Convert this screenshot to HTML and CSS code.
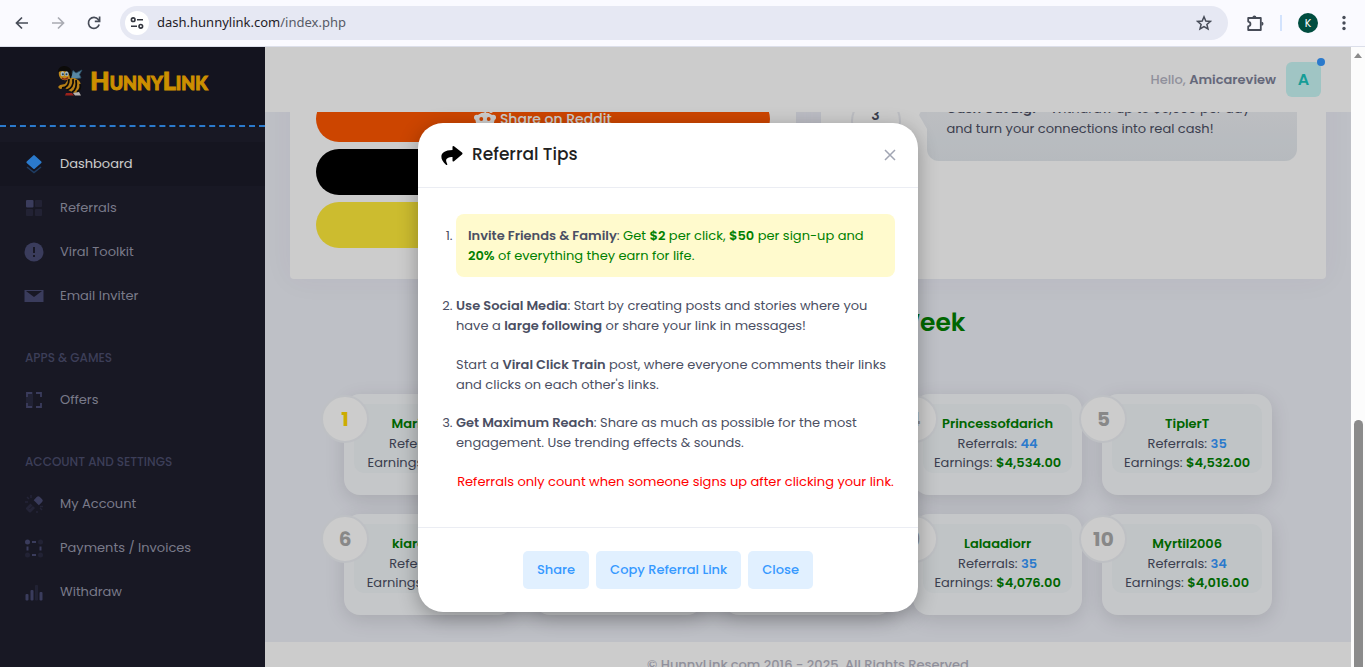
FILE: index.html
```html
<!DOCTYPE html>
<html lang="en">
<head>
  <meta charset="UTF-8" />
  <meta name="viewport" content="width=device-width, initial-scale=1.0"/>
  <title>HunnyLink Dashboard</title>
  <link rel="stylesheet" href="styles.css">
</head>
<body>
  <!-- Browser bar -->
  <header class="browser-bar">
    <button class="nav-btn" aria-label="Back">
      <svg width="16" height="16" viewBox="0 0 16 16" fill="none" stroke="#474c58" stroke-width="1.7"><path d="M14 8H3M8 2.500 2.500 8 8 13.500"/></svg>
    </button>
    <button class="nav-btn" aria-label="Forward">
      <svg width="16" height="16" viewBox="0 0 16 16" fill="none" stroke="#a9abb3" stroke-width="1.7"><path d="M2 8h11M8 2.500 13.500 8 8 13.500"/></svg>
    </button>
    <button class="nav-btn" aria-label="Reload">
      <svg width="16" height="16" viewBox="0 0 16 16" fill="none" stroke="#474c58" stroke-width="1.7"><path d="M13.200 9.500A5.500 5.500 0 1 1 12.300 4.500L13.500 6"/><path d="M13.600 1.500V6.300H8.800"/></svg>
    </button>
    <div class="address">
      <span class="site-info">
        <svg width="14" height="14" viewBox="0 0 14 14" fill="none" stroke="#33363f" stroke-width="1.6"><circle cx="3.200" cy="3.700" r="1.800"/><path d="M7 3.700h6M1 10.300h6"/><circle cx="10.800" cy="10.300" r="1.800"/></svg>
      </span>
      <span class="url">dash.hunnylink.com<span class="path">/index.php</span></span>
      <button class="nav-btn" aria-label="Bookmark">
        <svg width="16" height="16" viewBox="0 0 16 16" fill="none" stroke="#474c58" stroke-width="1.500"><path d="M8 1.800 9.800 6l4.600.4-3.500 3 1.100 4.500L8 11.500l-4 2.400 1.100-4.500-3.500-3L6.200 6z"/></svg>
      </button>
    </div>
    <button class="nav-btn" aria-label="Extensions">
      <svg width="18" height="18" viewBox="0 0 18 18"><path d="M2.200 4h12.600v12H2.200v-3.600c3-.6 3-4.200 0-4.800z" fill="none" stroke="#474c58" stroke-width="1.800" stroke-linejoin="round"/><path d="M6.400 3.500a2 2 0 0 1 4 0zM15.500 7.800a2 2 0 0 1 0 4z" fill="#474c58"/></svg>
    </button>
    <span class="bar-divider"></span>
    <span class="profile">K</span>
    <button class="nav-btn" aria-label="Menu">
      <svg width="16" height="16" viewBox="0 0 16 16" fill="#474c58"><circle cx="8" cy="2.500" r="1.700"/><circle cx="8" cy="8" r="1.700"/><circle cx="8" cy="13.500" r="1.700"/></svg>
    </button>
  </header>

  <div class="page">
    <!-- Sidebar -->
    <aside class="sidebar">
      <a class="brand" href="index.php">
        <svg width="26" height="32" viewBox="0 0 26 32">
          <path d="M14 12 16 5.500l3 2.500 6-3-2.500 4.500L24 13l-9 1z" fill="#6fa9cc" stroke="#35637e" stroke-width=".8"/>
          <path d="M12 13c6-1 12 2 12 8 0 4-3 6-6 7l-5-2-5-3-5 1-2-2 2-2 5-1z" fill="#e5a01b"/>
          <path d="M5 23c4 0 7-3 7-9M10 25c4-1 7-5 6-11M15 27c4-2 5-6 4-12M20 27c3-2 4-5 3-8" stroke="#100e0c" stroke-width="1.800" fill="none"/>
          <circle cx="8" cy="9" r="6.200" fill="#f0ac20"/>
          <path d="M1 7C1 0 11-1 14 5l1 5-2 4c0-6-4-10-12-7z" fill="#100e0c"/>
          <ellipse cx="5.500" cy="8.800" rx="1.900" ry="2.500" fill="#cfe6f0"/><ellipse cx="9.700" cy="8.800" rx="1.900" ry="2.500" fill="#cfe6f0"/>
          <circle cx="5.900" cy="9.300" r="1" fill="#24516b"/><circle cx="9.500" cy="9.300" r="1" fill="#24516b"/>
          <path d="M5 13q3 2.500 6-.5" stroke="#a5281c" stroke-width="1.300" fill="none"/>
          <path d="M9 28h6l2 2.500H8z" fill="#c22a22"/><path d="M16 28l6-1 2 3.500h-6z" fill="#e8e2dc"/>
        </svg>
        <span class="brand-name">HunnyLink</span>
      </a>
      <nav class="menu">
        <a class="menu-item active" href="#">
          <svg width="20" height="20" viewBox="0 0 20 20"><path d="m3 13 7 5.500 7-5.500" fill="none" stroke="#3699ff" stroke-opacity=".4" stroke-width="1.500"/><path d="M10.700 1.400 17.300 7.600q.7.700 0 1.400L10.700 14.800q-.7.500-1.400 0L2.700 9Q2 8.300 2.700 7.600l6.600-6.200q.7-.6 1.400 0z" fill="#3699ff"/></svg>
          Dashboard
        </a>
        <a class="menu-item" href="#">
          <svg width="20" height="20" viewBox="0 0 20 20" fill="#494b74"><rect x="2" y="2" width="7.500" height="7.500" rx="1"/><g opacity=".3"><rect x="11" y="2" width="7" height="7" rx="1"/><rect x="2" y="11" width="7" height="7" rx="1"/><rect x="11" y="11" width="7" height="7" rx="1"/></g></svg>
          Referrals
        </a>
        <a class="menu-item" href="#">
          <svg width="20" height="20" viewBox="0 0 20 20"><circle cx="10" cy="10" r="9.500" fill="#494b74"/><path d="M10 5v6M10 13v2" stroke="#1e1e2d" stroke-width="2"/></svg>
          Viral Toolkit
        </a>
        <a class="menu-item" href="#">
          <svg width="20" height="20" viewBox="0 0 20 20"><path d="M.5 4h19v12H.5z" fill="#494b74"/><path d="m2 5 8 6 8-6z" fill="#1e1e2d"/></svg>
          Email Inviter
        </a>
        <h4 class="menu-heading">Apps &amp; Games</h4>
        <a class="menu-item" href="#">
          <svg width="20" height="20" viewBox="0 0 20 20" fill="none" stroke="#494b74" stroke-width="1.800"><path d="M2 2h7v16H2z" fill="#494b74" stroke="none" opacity=".3"/><path d="M8 3H3v4M3 13v4h5M12 3h5v4M17 13v4h-5"/></svg>
          Offers
        </a>
        <h4 class="menu-heading">Account and Settings</h4>
        <a class="menu-item" href="#">
          <svg width="20" height="20" viewBox="0 0 20 20" fill="none" stroke="#494b74"><path d="m11 7.500 3.300-3.300 2.500 2.500-3.300 3.300" stroke-width="3.800" stroke-linejoin="round"/><g opacity=".35"><path d="m7.500 10.500-4 4 2.500 2.500 4-4" stroke-width="3" stroke-linejoin="round"/><path d="m3 3 2 2M7 1v3M1 8h3M13 17v2M16 14l2 2M16 12.500h3" stroke-width="1.500"/></g></svg>
          My Account
        </a>
        <a class="menu-item" href="#">
          <svg width="20" height="20" viewBox="0 0 20 20" fill="#494b74"><circle cx="3.500" cy="4" r="2.500"/><g opacity=".3"><circle cx="16.500" cy="4" r="2.500"/><circle cx="3.500" cy="17" r="2.500"/><circle cx="16.500" cy="17" r="2.500"/></g><path d="M8 3h4v2H8zM8 16h4v2H8zM2.500 8.500h2v4h-2zM15.500 8.500h2v4h-2z"/></svg>
          Payments / Invoices
        </a>
        <a class="menu-item" href="#">
          <svg width="20" height="20" viewBox="0 0 20 20" fill="#494b74"><rect x="1.500" y="12" width="3" height="6.500" rx="1"/><rect x="6.500" y="8" width="3" height="10.500" rx="1"/><rect x="11" y="3" width="3" height="15.500" rx="1" opacity=".3"/><rect x="15.500" y="10" width="3" height="8.500" rx="1"/></svg>
          Withdraw
        </a>
      </nav>
    </aside>

    <!-- Main content -->
    <div class="main">
      <div class="topbar">
        <span class="hello">Hello, <strong>Amicareview</strong></span>
        <span class="avatar">A<span class="dot"></span></span>
      </div>

      <div class="content">
        <div class="panels">
          <section class="panel share-panel">
            <button class="share reddit">
              <svg width="22" height="22" viewBox="0 0 22 22"><path d="m11 5 1-3 4 1" fill="none" stroke="#fff" stroke-width="1.500"/><circle cx="17" cy="3" r="2" fill="#fff"/><circle cx="2.800" cy="9.500" r="2.800" fill="#fff"/><circle cx="19.200" cy="9.500" r="2.800" fill="#fff"/><ellipse cx="11" cy="12.500" rx="9.500" ry="8" fill="#fff"/><circle cx="7.300" cy="11" r="1.900" fill="#ff5700"/><circle cx="14.700" cy="11" r="1.900" fill="#ff5700"/><path d="M7 16q4 3 8 0" fill="none" stroke="#ff5700" stroke-width="1.500"/></svg>
              Share on Reddit
            </button>
            <button class="share tiktok">Share on TikTok</button>
            <button class="share snapchat">Share on Snapchat</button>
          </section>
          <section class="panel">
            <div class="step">
              <span class="step-number">3</span>
              <p class="bubble"><strong>Cash Out Big!</strong> - Withdraw up to $5,000 per day and turn your connections into real cash!</p>
            </div>
          </section>
        </div>

        <h2 class="week-title">Top 10 Earners This Week</h2>

        <div class="leaders">
          <div class="leader"><span class="rank gold">1</span><div class="info"><b>Mariahlove</b><br>Referrals: <i>98</i><br>Earnings: <b>$9,216.00</b></div></div>
          <div class="leader"><span class="rank">2</span><div class="info"><b>Jaydenk</b><br>Referrals: <i>61</i><br>Earnings: <b>$6,120.00</b></div></div>
          <div class="leader"><span class="rank">3</span><div class="info"><b>Sunnyday</b><br>Referrals: <i>52</i><br>Earnings: <b>$5,048.00</b></div></div>
          <div class="leader"><span class="rank">4</span><div class="info"><b>Princessofdarich</b><br>Referrals: <i>44</i><br>Earnings: <b>$4,534.00</b></div></div>
          <div class="leader"><span class="rank">5</span><div class="info"><b>TiplerT</b><br>Referrals: <i>35</i><br>Earnings: <b>$4,532.00</b></div></div>
          <div class="leader"><span class="rank">6</span><div class="info"><b>kiaraloves1</b><br>Referrals: <i>38</i><br>Earnings: <b>$4,410.00</b></div></div>
          <div class="leader"><span class="rank">7</span><div class="info"><b>Bellarose</b><br>Referrals: <i>37</i><br>Earnings: <b>$4,302.00</b></div></div>
          <div class="leader"><span class="rank">8</span><div class="info"><b>Danny22</b><br>Referrals: <i>36</i><br>Earnings: <b>$4,188.00</b></div></div>
          <div class="leader"><span class="rank">9</span><div class="info"><b>Lalaadiorr</b><br>Referrals: <i>35</i><br>Earnings: <b>$4,076.00</b></div></div>
          <div class="leader"><span class="rank">10</span><div class="info"><b>Myrtil2006</b><br>Referrals: <i>34</i><br>Earnings: <b>$4,016.00</b></div></div>
        </div>

        <footer class="footer">© HunnyLink.com 2016 - 2025. All Rights Reserved</footer>
      </div>
    </div>

    <div class="scrollbar"><span class="arrow-up"></span><span class="thumb"></span></div>

    <!-- Modal -->
    <div class="overlay">
      <div class="modal" role="dialog" aria-labelledby="modalTitle">
        <div class="modal-header">
          <svg width="24" height="22" viewBox="0 0 24 22"><path d="M12.500 3q0-1.500 1.500-.7l8 6.200q1 1 0 2l-8 6.700q-1.500 1-1.500-.8v-3.400C7.500 13 4.500 15 7 19.500c.8 1.700-.3 2-1.300 1C-1.500 14 0 6 12.500 6z"/></svg>
          <h3 id="modalTitle">Referral Tips</h3>
          <button class="close-x" aria-label="Close dialog">
            <svg width="12" height="12" viewBox="0 0 12 12"><path d="m1 1 10 10M11 1 1 11" stroke="#a1a5b3" stroke-width="1.500"/></svg>
          </button>
        </div>
        <div class="modal-body">
          <ol>
            <li class="highlight"><strong>Invite Friends &amp; Family</strong>: <span class="green">Get <b>$2</b> per click, <b>$50</b> per sign-up and <b>20%</b> of everything they earn for life.</span></li>
            <li>
              <p><strong>Use Social Media</strong>: Start by creating posts and stories where you have a <strong>large following</strong> or share your link in messages!</p>
              <p>Start a <strong>Viral Click Train</strong> post, where everyone comments their links and clicks on each other's links.</p>
            </li>
            <li>
              <p><strong>Get Maximum Reach</strong>: Share as much as possible for the most engagement. Use trending effects &amp; sounds.</p>
              <p class="warning">Referrals only count when someone signs up after clicking your link.</p>
            </li>
          </ol>
        </div>
        <div class="modal-footer">
          <button class="btn">Share</button>
          <button class="btn">Copy Referral Link</button>
          <button class="btn">Close</button>
        </div>
      </div>
    </div>
  </div>
</body>
</html>
```
FILE: styles.css
```css
* {
  box-sizing: border-box;
}

body {
  font-family: Poppins, Inter, sans-serif;
  font-size: 13px;
  line-height: 1.5;
  margin: 0;
  height: 100vh;
  display: flex;
  flex-direction: column;
  overflow: hidden;
  color: #4b4f63;
}

button {
  font-family: inherit;
  border: none;
  cursor: pointer;
}

h2, h3, h4, p {
  margin: 0;
}

svg {
  flex: none;
}

strong, b {
  font-weight: 600;
}

/* browser bar */
.browser-bar {
  display: flex;
  align-items: center;
  height: 47px;
  flex: none;
  padding: 0 13px 0 14px;
  background-color: #fafaff;
  border-bottom: 1px solid #dcdfea;
}

.nav-btn {
  display: flex;
  padding: 0;
  background: none;
}

.browser-bar > .nav-btn + .nav-btn {
  margin-left: 20px;
}

.address {
  flex: 1;
  display: flex;
  align-items: center;
  height: 34px;
  margin: 0 18px;
  padding: 0 16px 0 5px;
  border-radius: 17px;
  background-color: #e6e8f3;
}

.site-info {
  display: flex;
  align-items: center;
  justify-content: center;
  width: 24px;
  height: 24px;
  border-radius: 50%;
  background-color: #fff;
}

.url {
  flex: 1;
  margin-left: 8px;
  font-family: "Noto Sans", sans-serif;
  font-size: 13px;
  color: #1f2127;
}

.path {
  color: #565a66;
}

.bar-divider {
  width: 2px;
  height: 16px;
  margin: 0 16px;
  background-color: #d3e3fd;
}

.profile {
  width: 20px;
  height: 20px;
  margin-right: 18px;
  border-radius: 50%;
  background-color: #004d40;
  color: #fff;
  font-size: 11px;
  line-height: 20px;
  text-align: center;
}

/* page */
.page {
  position: relative;
  flex: 1;
  min-height: 0;
  display: flex;
}

.sidebar {
  width: 265px;
  flex: none;
  background-color: #1e1e2d;
}

.brand {
  display: flex;
  align-items: center;
  justify-content: center;
  gap: 7px;
  height: 80px;
  padding-bottom: 11px;
  border-bottom: 2px dashed #3699ff;
  background-color: #1a1a27;
  color: #ffb400;
  text-decoration: none;
}

.brand-name {
  font-family: Lato, sans-serif;
  font-size: 25px;
  font-weight: 900;
  font-variant: small-caps;
  -webkit-text-stroke: 1px #ffb400;
}

.menu {
  padding-top: 15px;
}

.menu-item {
  display: flex;
  align-items: center;
  gap: 16px;
  height: 44px;
  padding: 0 24px;
  color: #9899ac;
  text-decoration: none;
}

.menu-item.active {
  background-color: #1b1b28;
  color: #fff;
}

.menu-heading {
  height: 60px;
  padding: 31px 25px 0;
  font-size: 12px;
  font-weight: 500;
  text-transform: uppercase;
  color: #4c4e6f;
}

.main {
  flex: 1;
  min-width: 0;
  display: flex;
  flex-direction: column;
  background-color: #eef0f8;
}

.topbar {
  display: flex;
  align-items: center;
  justify-content: flex-end;
  gap: 10px;
  height: 65px;
  flex: none;
  padding: 0 30px;
  background-color: #fff;
}

.hello {
  font-weight: 500;
  color: #b5b5c3;
}

.hello strong {
  color: #7e8299;
}

.avatar {
  position: relative;
  width: 35px;
  height: 35px;
  border-radius: 6px;
  background-color: #c9f7f5;
  color: #1bc5bd;
  font-size: 16px;
  font-weight: 600;
  line-height: 35px;
  text-align: center;
}

.dot {
  position: absolute;
  top: -4px;
  right: -4px;
  width: 8px;
  height: 8px;
  border-radius: 50%;
  background-color: #3699ff;
}

/* scrolled content */
.content {
  flex: 1;
  min-height: 0;
  overflow: hidden;
}

.panels {
  display: grid;
  grid-template-columns: 1fr 1fr;
  gap: 25px;
  margin-top: -42px;
  padding: 0 25px;
}

.panel {
  padding: 26px 26px 31px;
  border-radius: 4px;
  background-color: #fff;
  box-shadow: 0 0 30px rgba(82, 63, 105, 0.05);
}

.share-panel {
  display: flex;
  flex-direction: column;
  gap: 7px;
}

.share {
  display: flex;
  align-items: center;
  justify-content: center;
  gap: 4px;
  height: 46px;
  border-radius: 23px;
  color: #fff;
  font-size: 14px;
  font-weight: 500;
}

.reddit {
  background-color: #ff5700;
}

.tiktok {
  background-color: #000;
}

.snapchat {
  background-color: #ffeb3b;
}

.step {
  display: flex;
  gap: 26px;
  padding: 0 3px 0 4px;
}

.step-number {
  width: 50px;
  height: 50px;
  flex: none;
  border: 2px solid #ebedf3;
  border-radius: 50%;
  font-size: 14px;
  font-weight: 600;
  line-height: 34px;
  text-align: center;
}

.bubble {
  position: relative;
  flex: 1;
  padding: 3px 20px 23px;
  border-radius: 12px;
  background-image: linear-gradient(#eef0f4, #e4e9ee);
}

.bubble::before {
  content: "";
  position: absolute;
  top: 5px;
  left: -8px;
  border: 14px solid transparent;
  border-left: none;
  border-right: 8px solid #eaedf2;
}

.week-title {
  margin-top: 26px;
  text-align: center;
  font-size: 25px;
  font-weight: 600;
  line-height: 36px;
  color: green;
}

.leaders {
  display: grid;
  grid-template-columns: repeat(5, 1fr);
  gap: 19px 20px;
  padding: 53px 79px 27px;
}

.leader {
  position: relative;
  height: 101px;
  padding: 10px;
  border-radius: 16px;
  background-color: #f7f9fc;
  box-shadow: 0 5px 20px rgba(0, 0, 0, 0.12);
}

.rank {
  position: absolute;
  top: 1px;
  left: -23px;
  width: 48px;
  height: 48px;
  border: 2px solid #eef1f5;
  border-radius: 50%;
  background-color: #fff;
  color: #aaa;
  font-size: 20px;
  font-weight: 700;
  line-height: 44px;
  text-align: center;
}

.gold {
  color: #ffd700;
}

.info {
  padding-top: 10px;
  border-radius: 10px;
  background-color: #f0f5f8;
  text-align: center;
  white-space: nowrap;
}

.info b {
  color: green;
}

.info i {
  color: #3699ff;
  font-style: normal;
  font-weight: 600;
}

.footer {
  height: 60px;
  padding-top: 13px;
  background-color: #fff;
  color: #b5b5c3;
  font-weight: 500;
  text-align: center;
}

/* scrollbar */
.scrollbar {
  position: relative;
  z-index: 2;
  display: flex;
  flex-direction: column;
  align-items: center;
  justify-content: space-between;
  width: 14px;
  flex: none;
  padding-top: 6px;
  background-color: #fcfcfc;
}

.arrow-up {
  border: 4px solid transparent;
  border-top: none;
  border-bottom: 5px solid #8b8b8b;
}

.thumb {
  width: 9px;
  height: 247px;
  border-radius: 5px 5px 0 0;
  background-color: #8b8b8b;
}

/* modal */
.overlay {
  position: absolute;
  inset: 0;
  display: flex;
  align-items: flex-start;
  justify-content: center;
  padding: 76px 29px 0 0;
  background-color: rgba(0, 0, 0, 0.2);
}

.modal {
  width: 500px;
  border-radius: 25px;
  background-color: #fff;
  box-shadow: 0 5px 20px rgba(0, 0, 0, 0.3);
}

.modal-header {
  display: flex;
  align-items: center;
  gap: 8px;
  height: 65px;
  padding: 0 22px;
  border-bottom: 1px solid #ebedf3;
}

.modal-header h3 {
  flex: 1;
  font-size: 17px;
  font-weight: 500;
  color: #212121;
}

.close-x {
  display: flex;
  padding: 0;
  background: none;
}

.modal-body {
  padding: 26px 23px 35px 12px;
}

ol {
  display: flex;
  flex-direction: column;
  gap: 19px;
  margin: 0;
  padding-left: 26px;
}

li p + p {
  margin-top: 20px;
}

.highlight {
  padding: 12px;
  border-radius: 8px;
  background-color: #fffacd;
}

.green {
  color: green;
}

.warning {
  color: #f00;
  text-align: center;
}

.modal-footer {
  display: flex;
  justify-content: center;
  gap: 7px;
  padding: 23px;
  border-top: 1px solid #ebedf3;
}

.btn {
  height: 38px;
  padding: 0 14px;
  border-radius: 5px;
  background-color: #e1f0ff;
  color: #3699ff;
  font-size: 13px;
  font-weight: 500;
}
```
